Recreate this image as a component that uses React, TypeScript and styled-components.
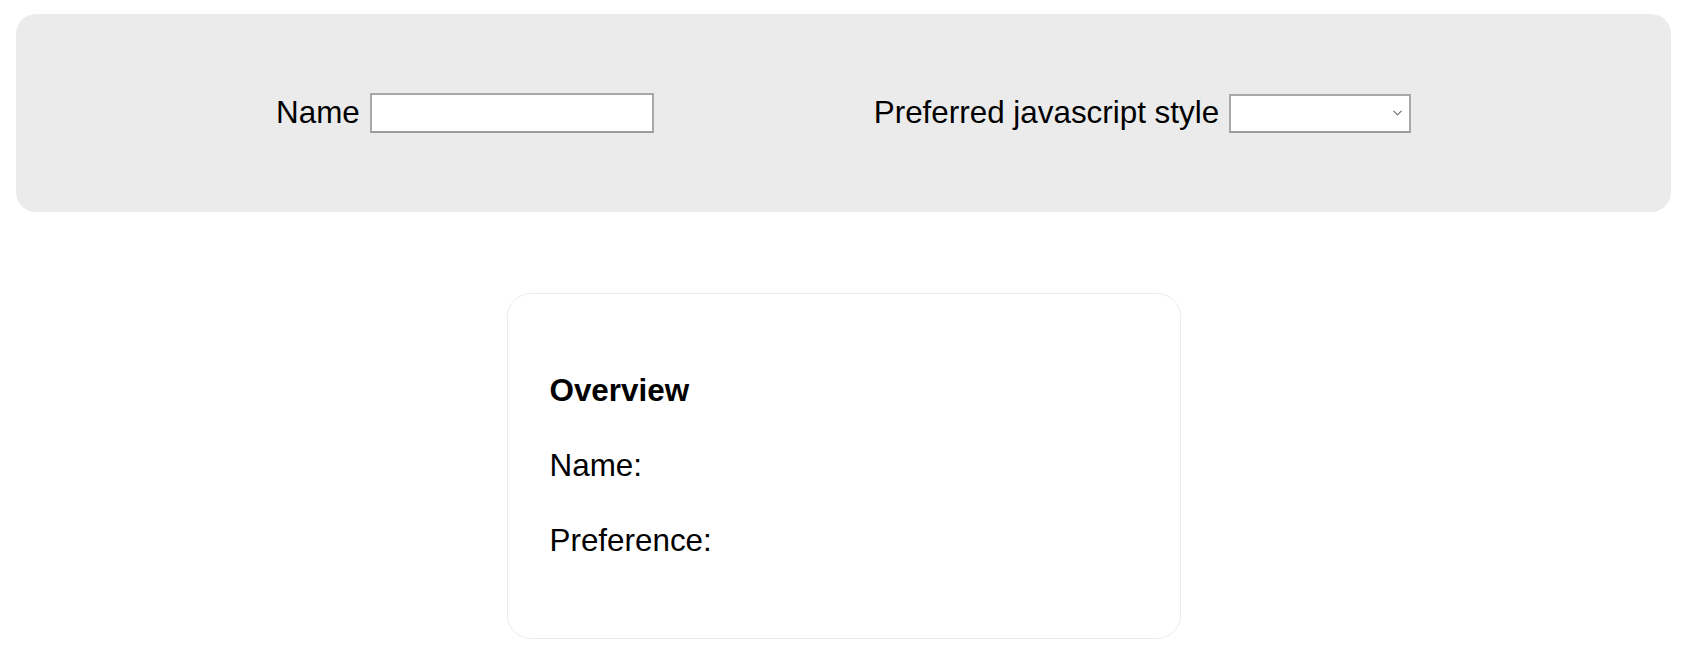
import React, { useState } from 'react';
import styled, { createGlobalStyle } from 'styled-components';
import { ChevronDown } from 'lucide-react';

const GlobalStyle = createGlobalStyle`
  html, body {
    margin: 0;
    padding: 0;
    background: #ffffff;
    font-family: "Liberation Sans", Arial, sans-serif;
    color: #000000;
  }
`;

export default function App() {
  const [name, setName] = useState('');
  const [style, setStyle] = useState('');

  return (
    <Page>
      <GlobalStyle />
      <FormPanel>
        <Field>
          <FieldLabel htmlFor="name">Name</FieldLabel>
          <TextInput id="name" value={name} onChange={(e) => setName(e.target.value)} />
        </Field>

        <Field>
          <FieldLabel htmlFor="style">Preferred javascript style</FieldLabel>
          <SelectWrap>
            <Select id="style" value={style} onChange={(e) => setStyle(e.target.value)}>
              <option value=""></option>
              <option value="functional">Functional</option>
              <option value="oop">Object oriented</option>
            </Select>
            <Chevron>
              <ChevronDown size={15} strokeWidth={1.8} color="#6f6f6f" />
            </Chevron>
          </SelectWrap>
        </Field>
      </FormPanel>

      <OverviewCard>
        <CardTitle>Overview</CardTitle>
        <CardLine>Name: {name}</CardLine>
        <CardLine>Preference: {style}</CardLine>
      </OverviewCard>
    </Page>
  );
}

// ─── STYLES ──────────────────────────────────────────

const Page = styled.div`
  display: flex;
  flex-direction: column;
  padding: 14px 19px 0 16px;
  gap: 81px;
`;

const FormPanel = styled.section`
  display: flex;
  align-items: center;
  gap: 220px;
  height: 198px;
  box-sizing: border-box;
  padding-left: 260px;
  background-color: #ebebeb;
  border-radius: 20px;
`;

const Field = styled.div`
  display: flex;
  align-items: center;
  gap: 10px;
`;

const FieldLabel = styled.label`
  font-size: 31.4px;
  line-height: 1.15;
  white-space: nowrap;
`;

const TextInput = styled.input`
  box-sizing: border-box;
  width: 284px;
  height: 40px;
  margin: 0;
  padding: 2px 6px;
  font-family: inherit;
  font-size: 24px;
  background: #ffffff;
  border: 2px solid #a8a8a8;
  border-bottom-color: #9c9c9c;
  border-radius: 0;
  outline: none;
`;

const SelectWrap = styled.div`
  position: relative;
  display: flex;
`;

const Select = styled.select`
  appearance: none;
  box-sizing: border-box;
  width: 182px;
  height: 39px;
  margin: 0;
  padding: 0 30px 0 6px;
  font-family: inherit;
  font-size: 24px;
  background: #ffffff;
  border: 2px solid #a8a8a8;
  border-bottom-color: #9c9c9c;
  border-radius: 0;
  outline: none;
`;

const Chevron = styled.span`
  position: absolute;
  right: 6px;
  top: 50%;
  transform: translateY(-50%);
  display: flex;
  pointer-events: none;
`;

const OverviewCard = styled.section`
  display: flex;
  flex-direction: column;
  gap: 39px;
  box-sizing: border-box;
  width: 674px;
  margin: 0 auto;
  padding: 79px 42px 79px 42px;
  background: #ffffff;
  border: 1px solid #ebebeb;
  border-radius: 24px;
`;

const CardTitle = styled.h3`
  margin: 0;
  font-size: 31.4px;
  line-height: 1.15;
  font-weight: 700;
`;

const CardLine = styled.p`
  margin: 0;
  font-size: 31.4px;
  line-height: 1.15;
`;
